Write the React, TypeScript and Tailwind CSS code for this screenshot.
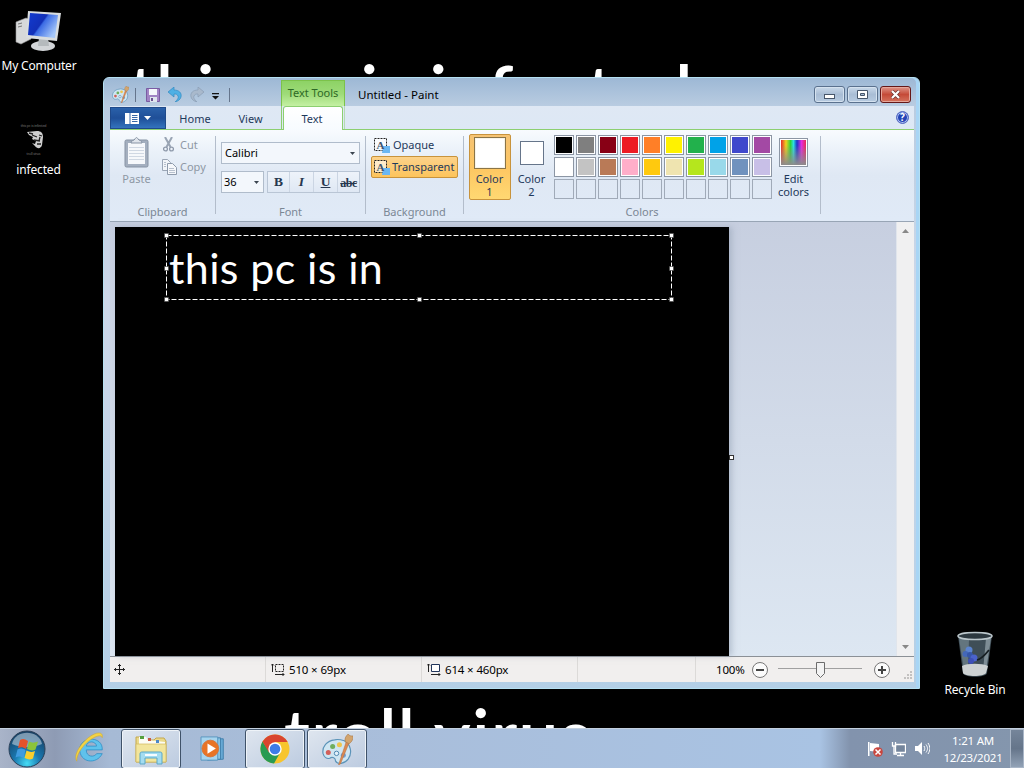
import type { ReactNode } from "react";
import clsx from "clsx";

const topColors = ["#000000", "#7f7f7f", "#880015", "#ed1c24", "#ff7f27", "#fff200", "#22b14c", "#00a2e8", "#3f48cc", "#a349a4"];
const bottomColors = ["#ffffff", "#c3c3c3", "#b97a57", "#ffaec9", "#ffc90e", "#efe4b0", "#b5e61d", "#99d9ea", "#7092be", "#c8bfe7"];

function PaintIcon({ size }: { size: number }) {
  return (
    <svg width={size} height={size} viewBox="0 0 32 32">
      <path
        d="M13 6C5 7 0 13 1 20c1 4 4 6 7 5 3-2 6 0 6 3 2 4 9 3 13-2 5-7 2-16-4-19-3-1-6-2-10-1z"
        fill="#cfe6f2"
        stroke="#5b93b8"
        strokeWidth="1.2"
      />
      <circle cx="6.500" cy="19" r="2.600" fill="#d2605a" />
      <circle cx="11" cy="13" r="2.600" fill="#6fae5e" />
      <circle cx="18" cy="11" r="2.600" fill="#efc64e" />
      <circle cx="15" cy="20" r="2.300" fill="#e2f1fa" stroke="#4b86b0" />
      <circle cx="22" cy="22" r="2.600" fill="#6f9fd4" />
      <path d="M25 8l3 1-9 22-2 1z" fill="#dc8a52" stroke="#b56c3a" strokeWidth=".5" />
      <path d="M24 8c-1-4 1-6 3-8 1 2 3 2 5 2 0 4-1 6-4 8z" fill="#d3a56e" stroke="#a87848" strokeWidth=".6" />
    </svg>
  );
}

function TitleBar() {
  return (
    <div className="flex h-7 shrink-0 items-start">
      <div className="flex h-full w-[171px] items-center pl-0.5 pt-[5px]">
        <PaintIcon size={17} />
        <div className="ml-[6px] h-3.5 w-px bg-[#65758c]" />
        <svg className="ml-[10px]" width="14" height="14" viewBox="0 0 14 14">
          <path d="M.5.500h13v13h-13z" fill="#a184c4" stroke="#7a5ca3" />
          <path d="M3 1h8v6H3z" fill="#f5f7fb" />
          <path d="M4 9h7v5H4z" fill="#dfe5ee" />
          <path d="M5 10h2v3H5z" fill="#6c5191" />
        </svg>
        <svg className="ml-[8px]" width="14" height="15" viewBox="0 0 14 15">
          <path d="M0 5L6 0v3c5 0 8 3 7 7-1 3-3 4-6 5 2-2 4-4 3-6C9 7 8 7 6 7v3z" fill="#4fb0e4" stroke="#3389c2" strokeWidth=".7" />
        </svg>
        <svg className="ml-[8px]" width="14" height="15" viewBox="0 0 14 15">
          <path d="M14 5L8 0v3C3 3 0 6 1 10c1 3 3 4 6 5-2-2-4-4-3-6 1-2 2-2 4-2v3z" fill="#a9b9cc" stroke="#8a9db4" strokeWidth=".7" />
        </svg>
        <svg className="ml-[7px] mt-0.5" width="9" height="8" viewBox="0 0 9 8">
          <path d="M1 1h7v1.300H1zM1 4h7L4.500 7.500z" fill="#111" />
        </svg>
        <div className="ml-[9px] h-3.5 w-px bg-[#65758c]" />
      </div>
      <div className="mt-[2px] flex h-[27px] w-16 items-center justify-center border border-b-0 border-[#7cc24a] bg-linear-to-b from-[#8dd265] via-[#9edb79] to-[#c7f2a6] pb-0.5 text-[#2e6a26]">
        Text Tools
      </div>
      <div className="ml-[13px] mt-2 text-[11.500px] text-black">Untitled - Paint</div>
      <div className="ml-auto mr-[3px] mt-2 flex gap-0.5">
        <div className="flex h-[17px] w-[31px] items-center justify-center rounded-[3px] border border-[#5a718e] bg-linear-to-b from-[#c9d9ea] via-[#a9bdd5] to-[#b7cbe1] shadow-[inset_0_0_0_1px_#d5e2ef]">
          <div className="mt-1 h-[5px] w-[11px] border border-[#47566b] bg-white" />
        </div>
        <div className="flex h-[17px] w-[31px] items-center justify-center rounded-[3px] border border-[#5a718e] bg-linear-to-b from-[#c9d9ea] via-[#a9bdd5] to-[#b7cbe1] shadow-[inset_0_0_0_1px_#d5e2ef]">
          <svg width="11" height="9" viewBox="0 0 11 9">
            <path d="M.5.500h10v8H.500z" fill="#fff" stroke="#47566b" />
            <path d="M3.500 3.500h4v2h-4z" fill="#a9bdd5" stroke="#47566b" />
          </svg>
        </div>
        <div className="flex h-[17px] w-[31px] items-center justify-center rounded-[3px] border border-[#651717] bg-linear-to-b from-[#de9489] via-[#c54a38] to-[#d4725d] shadow-[inset_0_0_0_1px_#e5a79b]">
          <svg width="11" height="9" viewBox="0 0 11 9">
            <path d="M2 1l7 7M9 1L2 8" stroke="#6b3434" strokeWidth="3.600" />
            <path d="M2 1l7 7M9 1L2 8" stroke="#fff" strokeWidth="2.200" />
          </svg>
        </div>
      </div>
    </div>
  );
}

function TabRow() {
  return (
    <div className="flex h-6 shrink-0 border-b border-[#8ccf70] bg-linear-to-b from-[#dfe8f4] to-[#dde8f5]">
      <div className="mt-px flex h-[22px] w-14 items-center justify-center gap-[5px] bg-linear-to-b from-[#2b62ab] via-[#1f4f98] to-[#3677c1] shadow-[inset_0_0_0_1px_#1f4a8b]">
        <svg width="14" height="11" viewBox="0 0 14 11">
          <path d="M0 0h14v11H0z" fill="#fff" />
          <path d="M5 0v11M7 2.500h5.500M7 4.500h5.500M7 6.500h5.500M7 8.500h5.500" stroke="#3a69a8" />
        </svg>
        <svg width="7" height="4" viewBox="0 0 7 4">
          <path d="M0 0h7L3.500 4z" fill="#fff" />
        </svg>
      </div>
      <div className="flex w-[58px] items-center justify-center pt-[3px]">Home</div>
      <div className="flex w-[53px] items-center justify-center pt-[3px]">View</div>
      <div className="ml-1 flex w-[2px] border-l border-[#8ccf70]" />
      <div className="flex h-6 w-[60px] items-center justify-center rounded-t-[3px] border border-b-0 border-[#8ccf70] bg-linear-to-b from-white to-[#f7fbff] pr-0.5 pt-0.5">
        Text
      </div>
      <div className="w-[2px] border-r border-[#8ccf70]/50" />
      <div className="ml-auto mr-[5px] mt-[5px] flex size-[13px] items-center justify-center rounded-full border border-[#5b6fc4] bg-[#2343b5] text-[10px] font-bold text-white shadow-[inset_0_0_0_1px_#a9bcf2]">
        ?
      </div>
    </div>
  );
}

function Group({ label, className, children }: { label: string; className: string; children: ReactNode }) {
  return (
    <div className={clsx("flex shrink-0 flex-col", className)}>
      <div className="h-[74px]">{children}</div>
      <div className="text-center leading-[16px] text-[#7b8795]">{label}</div>
    </div>
  );
}

function Separator() {
  return <div className="mt-1.5 h-[78px] w-px shrink-0 bg-[#b3bdcb]" />;
}

function OpacityIcon() {
  return (
    <svg width="16" height="15" viewBox="0 0 16 15">
      <path d="M.5.500h12v12H.500z" fill="#fff" fillOpacity=".6" stroke="#222" strokeDasharray="2 1" />
      <path d="M9 8h7v7H8z" fill="#6bb7f2" />
      <text x="2.500" y="10.500" fontSize="11" fontFamily="Liberation Serif, serif" fontWeight="bold" fill="#3c5470">A</text>
    </svg>
  );
}

function DropArrow() {
  return (
    <svg width="5" height="3" viewBox="0 0 5 3">
      <path d="M0 0h5L2.500 3z" fill="#3b4550" />
    </svg>
  );
}

function Ribbon() {
  return (
    <div className="flex h-[92px] shrink-0 border-b border-[#98a5b5] bg-[linear-gradient(180deg,#f8fbfe,#eaf1f9_22px,#dfe8f4_45px,#e0eaf7)]">
      <Group label="Clipboard" className="w-[105px]">
        <div className="flex text-[#8e98a4]">
          <div className="flex w-[53px] flex-col items-center pt-[7px]">
            <svg width="25" height="31" viewBox="0 0 25 31">
              <rect x="1" y="3" width="23" height="27" rx="1.500" fill="#a4afbf" stroke="#8793a4" />
              <path d="M4 6h17v21H4z" fill="#f6f8fb" />
              <path d="M5 10.500h15M5 13.500h15M5 16.500h15M5 19.500h15M5 22.500h15" stroke="#d0d8e3" />
              <path d="M7 6c0-3 3-2 4-4 1-2 2-2 3 0 1 2 4 1 4 4z" fill="#dfe4eb" stroke="#8793a4" />
            </svg>
            <span className="mt-[3px]">Paste</span>
          </div>
          <div className="flex flex-col pt-[7px]">
            <div className="flex h-[22px] items-start gap-[6px]">
              <svg width="11" height="15" viewBox="0 0 11 15">
                <path d="M2 0l5.500 10M9 0L3.500 10" stroke="#9aa5b4" strokeWidth="2" fill="none" />
                <circle cx="2.500" cy="12" r="1.900" fill="none" stroke="#8e9aab" strokeWidth="1.300" />
                <circle cx="8.500" cy="12" r="1.900" fill="none" stroke="#8e9aab" strokeWidth="1.300" />
              </svg>
              Cut
            </div>
            <div className="flex items-start gap-[3px]">
              <svg className="-ml-px" width="15" height="16" viewBox="0 0 15 16">
                <path d="M.5.500h5l3 3v8h-8z" fill="#f2f5f9" stroke="#9ba6b6" />
                <path d="M5.500 4.500h5l4 4v7h-9z" fill="#f6f8fb" stroke="#8e9aab" />
                <path d="M7 9.500h5M7 11.500h6M7 13.500h6M2 3.500h2M2 5.500h2M2 7.500h2" stroke="#b7c0cd" />
              </svg>
              Copy
            </div>
          </div>
        </div>
      </Group>
      <Separator />
      <Group label="Font" className="w-[149px]">
        <div className="flex flex-col gap-[7px] pl-[5px] pt-3 text-[11px] text-black">
          <div className="flex h-[22px] w-[139px] items-center justify-between border border-[#b0bccb] bg-[#f3f7fc] pl-[3px] pr-1">
            Calibri
            <DropArrow />
          </div>
          <div className="flex">
            <div className="flex h-[22px] w-[43px] items-center justify-between border border-[#b0bccb] bg-[#f3f7fc] pl-[2px] pr-1">
              36
              <DropArrow />
            </div>
            <div className="ml-[3px] flex h-[22px] w-[93px] border border-[#b9c5d5] bg-linear-to-b from-[#eef3fa] to-[#dfe8f4] font-['Liberation_Serif',serif] text-[13.500px] font-bold leading-[19px] text-[#26374f]">
              <div className="w-[22px] border-r border-[#cbd5e3] text-center">B</div>
              <div className="w-6 border-r border-[#cbd5e3] text-center italic">I</div>
              <div className="w-6 border-r border-[#cbd5e3] text-center underline">U</div>
              <div className="flex-1 text-center text-[12px] leading-[22px] tracking-[-0.500px] line-through">abc</div>
            </div>
          </div>
        </div>
      </Group>
      <Separator />
      <Group label="Background" className="w-[97px]">
        <div className="ml-[5px] flex w-[87px] flex-col pt-1 text-[#1e395b]">
          <div className="flex h-[22px] items-center gap-[3px] pl-[3px]">
            <OpacityIcon />
            Opaque
          </div>
          <div className="flex h-[22px] items-center gap-[2px] rounded-[2px] border border-[#c8933c] bg-linear-to-b from-[#fcd28a] to-[#fdc45b] pl-[2px]">
            <OpacityIcon />
            Transparent
          </div>
        </div>
      </Group>
      <Separator />
      <Group label="Colors" className="w-[356px]">
        <div className="flex pl-[5px] pt-1 text-[#1e395b]">
          <div className="flex h-[66px] w-[42px] flex-col items-center rounded-[2px] border border-[#c8933c] bg-linear-to-b from-[#f5c374] via-[#fdc662] to-[#ffd872] pr-px pt-[2px] text-center leading-[13px]">
            <div className="mb-[3px] size-8 border border-[#8a7448] bg-white shadow-[inset_0_0_0_1px_#f8f4e8]" />
            Color
            <br />1
          </div>
          <div className="flex w-[42px] flex-col items-center pr-px pt-[7px] text-center leading-[13px]">
            <div className="mb-[7px] size-6 border border-[#66758a] bg-white" />
            Color
            <br />2
          </div>
          <div className="ml-px mt-px grid h-[64px] grid-cols-10 gap-0.5">
            {topColors.concat(bottomColors).map((color) => (
              <div
                key={color}
                className="size-5 border border-[#8c96a4] shadow-[inset_0_0_0_1px_#fff]"
                style={{ backgroundColor: color }}
              />
            ))}
            {topColors.map((color) => (
              <div key={color} className="size-5 border border-[#a0aab8]" />
            ))}
          </div>
          <div className="flex w-[43px] flex-col items-center pt-1 text-center leading-[13px]">
            <div className="mb-[5px] flex size-[29px] flex-col border border-[#8c96a4] bg-white p-px">
              <div className="flex flex-1 flex-col justify-end bg-[linear-gradient(90deg,#e22b2b,#f0d21e_20%,#2cd43a_38%,#2be0e0_50%,#1c34c8_64%,#e32be0_82%,#e82a52)]">
                <div className="h-5 bg-linear-to-b from-transparent to-[#8c8c8c]" />
              </div>
            </div>
            Edit
            <br />
            colors
          </div>
        </div>
      </Group>
      <Separator />
    </div>
  );
}

const handles = [
  [0, 0], [253, 0], [505, 0],
  [0, 33], [505, 33],
  [0, 64], [253, 64], [505, 64],
];

function Workspace() {
  return (
    <div className="flex h-[434px] shrink-0 bg-linear-to-b from-[#c7cfe0] to-[#dde7f2] pl-[5px]">
      <div className="relative mt-[5px] w-[614px] bg-black shadow-[3px_0_6px_#8d9bb080]">
        <div className="absolute left-[51px] top-2 h-[65px] w-[506px]">
          <svg className="absolute inset-0 overflow-visible" width="506" height="65">
            <path d="M.5.500h505v64H.500z" fill="none" stroke="#fff" strokeDasharray="5 2" />
            {handles.map(([x, y]) => (
              <rect key={`${x}-${y}`} x={x - 1.5} y={y - 1.5} width="4" height="4" fill="#fff" stroke="#444" strokeWidth=".6" />
            ))}
          </svg>
          <div className="whitespace-pre pl-[3px] pt-[3px] font-[Lato,sans-serif] text-[43px] leading-[60px] tracking-[0.380px] text-white">this pc is in</div>
        </div>
        <div className="absolute -right-[5px] top-[228px] size-[5px] border border-[#333] bg-white" />
      </div>
      <div className="ml-auto flex w-[18px] flex-col items-center justify-between border-l border-[#e0e5ec] bg-[#f0f0f1] py-[7px]">
        <svg width="7" height="4" viewBox="0 0 7 4">
          <path d="M0 4h7L3.500 0z" fill="#888" />
        </svg>
        <svg width="7" height="4" viewBox="0 0 7 4">
          <path d="M0 0h7L3.500 4z" fill="#888" />
        </svg>
      </div>
    </div>
  );
}

function StatusBar() {
  return (
    <div className="flex h-[26px] shrink-0 items-center border-t border-[#8b9096] bg-[#f1efee] text-[11.500px] tracking-[-0.150px] text-black">
      <div className="h-full w-[156px] border-r border-[#dcdad8] pl-1 pt-[7px]">
        <svg width="11" height="11" viewBox="0 0 11 11">
          <path d="M5.500 0v11M0 5.500h11M4 2l1.500-1.500L7 2M4 9l1.500 1.500L7 9M2 4L.500 5.500 2 7M9 4l1.500 1.500L9 7" fill="none" stroke="#222" />
        </svg>
      </div>
      <div className="flex h-full w-[156px] items-center gap-[4px] border-r border-[#dcdad8] pl-[5px]">
        <svg width="14" height="13" viewBox="0 0 14 13">
          <path d="M4.500 1.500h8v7h-8z" fill="none" stroke="#222" strokeDasharray="2 1" />
          <path d="M1.500 1v8M0 2.500l1.500-1.500L3 2.500M4 11.500h9M11.500 10l1.500 1.500-1.500 1.500" fill="none" stroke="#222" />
        </svg>
        510 × 69px
      </div>
      <div className="flex h-full w-[156px] items-center gap-[4px] border-r border-[#dcdad8] pl-[5px]">
        <svg width="14" height="13" viewBox="0 0 14 13">
          <path d="M4.500 1.500h8v7h-8z" fill="#fff" stroke="#22365c" />
          <path d="M1.500 1v8M0 2.500l1.500-1.500L3 2.500M4 11.500h9M11.500 10l1.500 1.500-1.500 1.500" fill="none" stroke="#222" />
        </svg>
        614 × 460px
      </div>
      <div className="h-full w-[118px] border-r border-[#dcdad8]" />
      <div className="flex flex-1 items-center pl-5">
        <span className="w-9">100%</span>
        <svg width="16" height="16" viewBox="0 0 16 16">
          <circle cx="8" cy="8" r="7.500" fill="#fbfbfb" stroke="#777" />
          <path d="M4 8h8" stroke="#444" strokeWidth="2" />
        </svg>
        <svg className="ml-[10px]" width="84" height="18" viewBox="0 0 84 18">
          <path d="M0 7.500h84" stroke="#a0a0a0" />
          <path d="M38.500 1.500h8v11l-4 4-4-4z" fill="#f3f3f3" stroke="#6c6c6c" />
        </svg>
        <svg className="ml-3" width="16" height="16" viewBox="0 0 16 16">
          <circle cx="8" cy="8" r="7.500" fill="#fbfbfb" stroke="#777" />
          <path d="M4 8h8M8 4v8" stroke="#444" strokeWidth="2" />
        </svg>
        <svg className="ml-auto mr-px mt-3" width="9" height="9" viewBox="0 0 9 9">
          <path d="M6 0h2v2H6zM3 3h2v2H3zM6 3h2v2H6zM0 6h2v2H0zM3 6h2v2H3zM6 6h2v2H6z" fill="#c3c1c0" />
        </svg>
      </div>
    </div>
  );
}

function PaintWindow() {
  return (
    <div className="absolute left-[103px] top-[77px] flex h-[612px] w-[817px] flex-col rounded-t-[6px] border border-[#b5e0f2] bg-[linear-gradient(180deg,#9db8d5,#b9cce1_28px,#c5d4e6_145px,#cdd8ea_220px,#b3cfe6)] pl-1.5 pr-[5px] text-[11px] text-[#1e395b] shadow-[inset_-3px_0_0_#a8d5f5]">
      <TitleBar />
      <TabRow />
      <Ribbon />
      <Workspace />
      <StatusBar />
    </div>
  );
}

function DesktopIcons() {
  return (
    <>
      <div className="absolute left-0 top-2.5 flex w-[78px] flex-col items-center text-[12px] tracking-[-0.200px] text-white">
        <svg width="48" height="44" viewBox="0 0 48 44">
          <defs>
            <linearGradient id="screen" x1="0" y1="0" x2="1" y2=".6">
              <stop offset="0" stopColor="#123bd0" />
              <stop offset=".5" stopColor="#1230b8" />
              <stop offset=".55" stopColor="#3b6be4" />
              <stop offset="1" stopColor="#a6c8fa" />
            </linearGradient>
          </defs>
          <path d="M1 12l10-4 5 2v19L6 34l-5-2z" fill="#d7d9da" stroke="#999" strokeWidth=".6" />
          <path d="M3 14l4-1M3 17l4-1" stroke="#777" />
          <ellipse cx="28" cy="36" rx="12" ry="5" fill="#d2d5d8" />
          <path d="M24 28h9l1 8H23z" fill="#b5babd" />
          <path d="M13 1l33 2-4 28-31-3z" fill="#d9dddf" />
          <path d="M15 3l28 2-3 23-27-3z" fill="url(#screen)" />
        </svg>
        <span className="leading-6">My Computer</span>
      </div>
      <div className="absolute left-0 top-[122px] flex w-[77px] flex-col items-center text-[12px] tracking-[-0.150px] text-white">
        <span className="-ml-2.5 text-[3.500px] leading-[8px] text-[#777]">this pc is infected</span>
        <svg className="-ml-1.5" width="17" height="20" viewBox="0 0 17 20">
          <path d="M0 2l10-1c4 0 6 2 6 6l-1 8c-1 4-5 4-7 1L5 13l3 1 1-3-4-2 1-2-4-2z" fill="#cfcfcf" />
          <path d="M5 5l5 2M12 5l3 1M7 10l6 1M10 14h4M13 7l-1 4M2 3l4 1" stroke="#222" strokeWidth="1.300" />
        </svg>
        <span className="-ml-2.5 text-[3.500px] leading-[8px] text-[#777]">troll virus</span>
        <span className="leading-6">infected</span>
      </div>
      <div className="absolute left-[938px] top-[631px] flex w-[74px] flex-col items-center text-[12px] tracking-[-0.200px] text-white">
        <svg width="38" height="47" viewBox="0 0 38 47">
          <path d="M2 5h34l-5 37c-1 5-23 5-24 0z" fill="#3f4e57" />
          <path d="M3 7h10L12 40H8z" fill="#879ba5" opacity=".5" />
          <path d="M30 7h5l-5 33h-3z" fill="#a8b7be" opacity=".6" />
          <path d="M6 35c5-3 20-3 26 0l-2 7c-2 4-21 4-23 0z" fill="#cdd1d2" />
          <circle cx="13" cy="19" r="3.500" fill="#5b84d0" />
          <circle cx="9.500" cy="23" r="3" fill="#4468b8" />
          <circle cx="14" cy="24" r="3" fill="#3656a6" />
          <circle cx="18" cy="27" r="3.500" fill="#4a62cc" />
          <circle cx="15" cy="30" r="3" fill="#3d4fb8" />
          <path d="M21 29c4-1 8-5 12-10" fill="none" stroke="#161e22" strokeWidth="1.800" />
          <ellipse cx="19" cy="5" rx="17" ry="3.500" fill="#2c383f" stroke="#bcc7cc" strokeWidth="1.500" />
        </svg>
        <span className="leading-6">Recycle Bin</span>
      </div>
    </>
  );
}

function TaskButton({ active, className, children }: { active?: boolean; className: string; children: ReactNode }) {
  return (
    <div
      className={clsx(
        "flex h-10 shrink-0 items-center justify-center",
        active && "rounded-[3px] border border-[#3f5269] bg-linear-to-br from-[#dfe6ef] to-[#bccbe0] shadow-[inset_0_0_0_1px_#eef3f8]",
        className
      )}
    >
      {children}
    </div>
  );
}

function Taskbar() {
  return (
    <div className="absolute inset-x-0 bottom-0 flex h-10 border-t border-[#c3d0df] bg-[linear-gradient(90deg,#a9b4c9,#8e9bb4_55px,#a6bad5_110px,#a9bedb_400px,#a9c3e3_820px,#8293ad_850px,#8496ad)]">
      <TaskButton className="w-[54px]">
        <svg width="38" height="38" viewBox="0 0 38 38">
          <defs>
            <radialGradient id="orb" cx=".5" cy=".9" r=".9">
              <stop offset="0" stopColor="#45dcf5" />
              <stop offset=".4" stopColor="#1a78b0" />
              <stop offset="1" stopColor="#173d60" />
            </radialGradient>
          </defs>
          <circle cx="19" cy="19" r="18" fill="url(#orb)" stroke="#2b4058" />
          <path d="M4 14c3-15 27-15 30 0-8 4-22 4-30 0z" fill="#cddce8" opacity=".55" />
          <path d="M12 10c3-2 5-1 8 1l-2 8c-3-2-5-2-8-1z" fill="#e5532b" />
          <path d="M21 11.500c3 1.500 5 1.500 9 0l-2.500 8c-3 1.500-5 1-8.500-.5z" fill="#8cc43b" />
          <path d="M9.500 19.500c3-1.500 5-1 8 .5l-2 8c-3-2-5-2-8-.5z" fill="#3f9be0" />
          <path d="M18.500 20.500c3 1.500 5 2 8.500.5l-2 7.500c-3 1.500-5 1-8.500-.5z" fill="#f9ce2e" />
        </svg>
      </TaskButton>
      <TaskButton className="w-[67px] pb-0.5 pl-1">
        <svg width="32" height="32" viewBox="0 0 34 34">
          <path
            d="M30 19H13c0 8 9 8 11 4h6C24 35 6 33 6 18 7 4 31 4 30 19zM13 15h11c-1-6-10-6-11 0z"
            fill="#5fc2ec"
            stroke="#2b8cc4"
            strokeWidth=".8"
          />
          <path d="M3 31C-2 24 10 7 22 2c5-2 9-1 8 4-1-3-5-2-9 0C11 11 2 24 3 31z" fill="#f3d343" stroke="#d2a92a" strokeWidth=".6" />
        </svg>
      </TaskButton>
      <TaskButton active className="w-[60px]">
        <svg width="34" height="32" viewBox="0 0 34 32">
          <path d="M2 4h8l2 3h8l2-2h8l2 3v21H2z" fill="#ead98a" stroke="#c4a84c" />
          <path d="M5 4h7l2 3 17 2v4H5z" fill="#fcfcf3" />
          <path d="M6 3h4v3H6z" fill="#55a03e" />
          <path d="M14 5h3v3h-3z" fill="#c75941" />
          <path d="M22 7h3v3h-3z" fill="#4b87c9" />
          <path d="M2 11h30v18H2z" fill="#f2e59c" stroke="#d1b75b" strokeWidth=".7" />
          <path d="M6 31V21c0-2 1-2 3-2h16c2 0 3 0 3 2v10h-5v-6H11v6z" fill="#a3dcf0" stroke="#5ba7c7" />
          <path d="M11 22h12" stroke="#f6fcff" strokeWidth="2" />
        </svg>
      </TaskButton>
      <TaskButton className="w-[64px] pl-0.5">
        <svg width="28" height="26" viewBox="0 0 30 28">
          <path d="M8 3h17v22l-17 1z" fill="#67a9d5" stroke="#407fac" />
          <path d="M5 2h17v23H5z" fill="#89c4e4" stroke="#407fac" />
          <path d="M1 1h18v25H1z" fill="#a6d4ee" stroke="#5694be" />
          <circle cx="11" cy="13.500" r="9" fill="#e87426" stroke="#d4763c" />
          <path d="M8 8l9 5.500L8 19z" fill="#fff" />
        </svg>
      </TaskButton>
      <TaskButton active className="w-[60px]">
        <svg width="30" height="30" viewBox="0 0 30 30">
          <circle cx="15" cy="15" r="14.500" fill="#f7c52e" />
          <path d="M2.500 7.500A14.500 14.500 0 0 0 14 29.500L20.500 18 9 17z" fill="#299b52" />
          <path d="M15 8h12.600A14.500 14.500 0 0 0 2.500 7.500L9 18.500z" fill="#d9452f" />
          <circle cx="15" cy="15" r="6.700" fill="#fff" />
          <circle cx="15" cy="15" r="5.300" fill="#3c7ce8" />
        </svg>
      </TaskButton>
      <TaskButton active className="ml-0.5 w-[60px]">
        <PaintIcon size={31} />
      </TaskButton>
      <div className="ml-auto flex items-center text-white">
        <svg width="16" height="16" viewBox="0 0 16 16">
          <path d="M1 1h1.500v14H1zM3 2l9 1v8l-9-1z" fill="#fff" />
          <circle cx="11" cy="11" r="4.800" fill="#c9463e" />
          <path d="M8.500 8.500l5 5m0-5l-5 5" stroke="#fff" strokeWidth="1.500" />
        </svg>
        <svg className="ml-[8px]" width="15" height="16" viewBox="0 0 15 16">
          <path d="M4.500 3.500h10v8h-10z" fill="#74859c" stroke="#fff" strokeWidth="1.300" />
          <path d="M6 14.500h7M9.500 12v2M1.500 1v4h3V1M3 5v8h3" fill="none" stroke="#fff" strokeWidth="1.300" />
        </svg>
        <svg className="ml-[8px]" width="16" height="16" viewBox="0 0 16 16">
          <path d="M1 5h3l4-4v13l-4-4H1z" fill="#fff" />
          <path d="M10 5c1 2 1 3 0 5M12 3.500c2 3 2 5 0 8M14 2c2.500 4 2.500 7 0 11" fill="none" stroke="#fff" />
        </svg>
        <div className="ml-[13px] w-[60px] text-center text-[11.500px] leading-[17px] tracking-[-0.200px]">
          1:21 AM
          <br />
          12/23/2021
        </div>
        <div className="ml-[7px] h-full w-3.5 border border-[#a9b6c7] bg-linear-to-b from-[#75859a] via-[#65758a] to-[#92a2b6]" />
      </div>
    </div>
  );
}

export default function App() {
  return (
    <div className="relative h-screen w-screen overflow-hidden bg-black font-['Noto_Sans','Open_Sans',sans-serif]">
      <div className="absolute left-[129px] top-[40px] whitespace-pre font-[Lato,sans-serif] text-[71px] font-semibold leading-[100px] tracking-[0.950px] text-white">
        this pc is infected
      </div>
      <div className="absolute left-[284px] top-[684px] whitespace-pre font-[Lato,sans-serif] text-[71px] font-semibold leading-[100px] tracking-[1.300px] text-white">
        troll virus
      </div>
      <DesktopIcons />
      <PaintWindow />
      <Taskbar />
    </div>
  );
}
